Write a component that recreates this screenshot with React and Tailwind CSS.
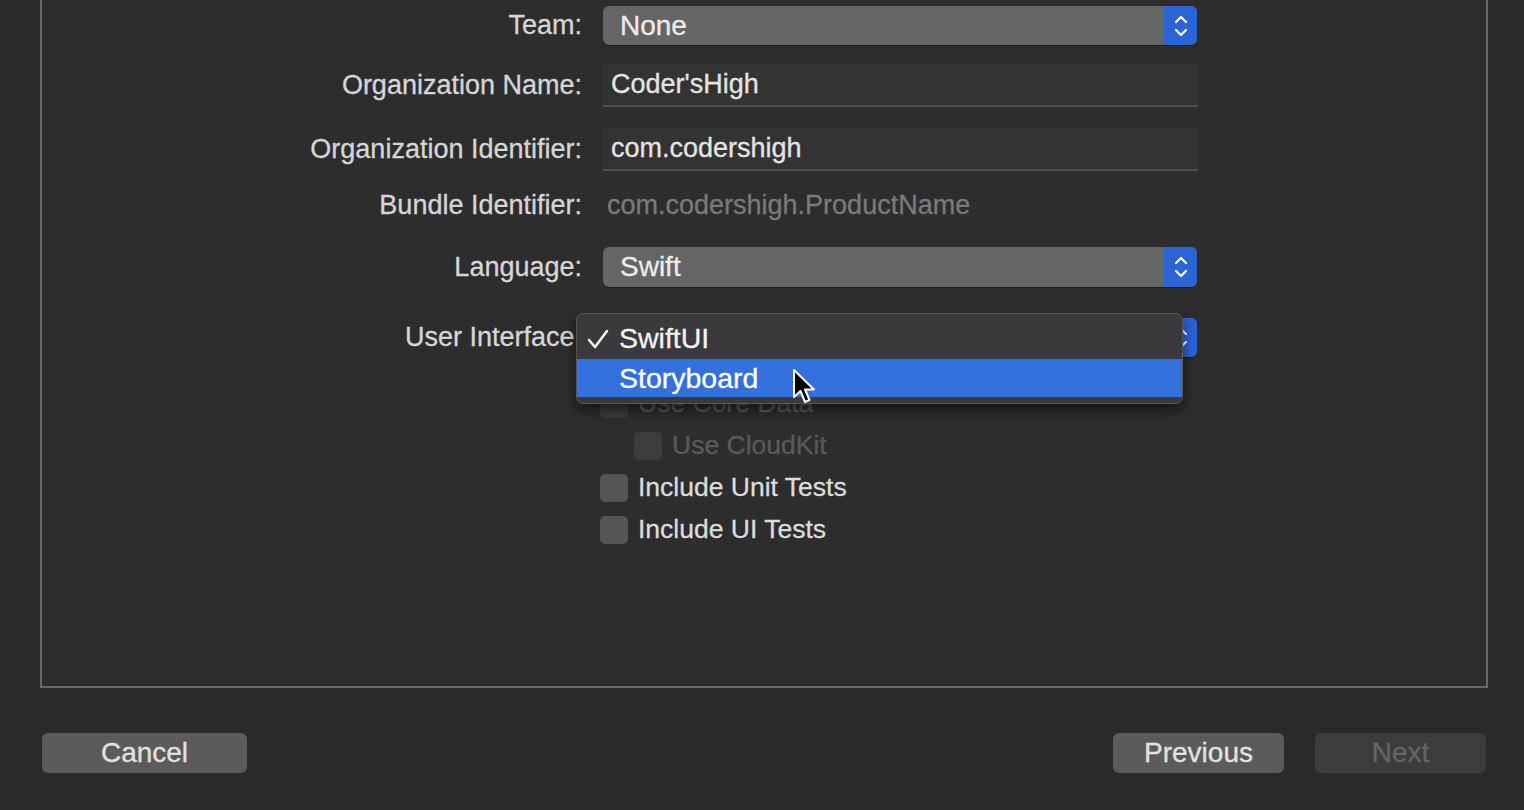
import React from 'react';

const font = { fontFamily: '"Liberation Sans", Arial, sans-serif' };

function Stepper() {
  return (
    <div className="w-[33px] h-full bg-[#2c64d6] rounded-r-[6px] flex items-center justify-center">
      <svg width="16" height="28" viewBox="0 0 16 28" fill="none" stroke="#fff" strokeWidth="2.2" strokeLinecap="round" strokeLinejoin="round">
        <path d="M3 10 L8 5 L13 10" />
        <path d="M3 18 L8 23 L13 18" />
      </svg>
    </div>
  );
}

function PopUp({ value }) {
  return (
    <div className="w-[594px] h-full bg-[#656565] rounded-[6px] flex items-stretch shadow-[0_1px_1px_rgba(0,0,0,0.4)]">
      <div className="flex-1 flex items-center pl-[17px] text-[28px] text-[#ececec]">{value}</div>
      <Stepper />
    </div>
  );
}

function TextField({ value }) {
  return (
    <div className="w-[595px] h-full bg-[#333334] border-b-2 border-[#4e4e4e] flex items-center pl-[8px] text-[27px] text-[#e4e4e4]">
      {value}
    </div>
  );
}

function Row({ label, mt, h, children }) {
  return (
    <div className={`flex items-center ${mt} ${h}`}>
      <div className="w-[540px] text-right text-[27px] text-[#d6d6d6]">{label}</div>
      <div className="ml-[21px] h-full flex items-center">{children}</div>
    </div>
  );
}

function Check({ label, mt, pl, dim }) {
  return (
    <div className={`flex items-center h-[28px] ${mt} ${pl}`}>
      <div className={`w-[28px] h-[28px] rounded-[5px] ${dim ? 'bg-[#3c3c3d]' : 'bg-[#555556]'}`} />
      <span className={`ml-[10px] text-[26.5px] ${dim ? 'text-[#5a5a5a]' : 'text-[#dcdcdc]'}`}>{label}</span>
    </div>
  );
}

function Cursor() {
  return (
    <svg className="absolute left-[215px] top-[10px]" width="26" height="36" viewBox="0 0 26 36">
      <path d="M2 1 L2 28 L8.5 22 L13 33 L17.5 31 L13 20.5 L22 20.5 Z" fill="#000" stroke="#fff" strokeWidth="2" strokeLinejoin="round" />
    </svg>
  );
}

function Menu() {
  return (
    <div className="absolute left-[534px] top-[313px] w-[607px] h-[91px] rounded-[7px] bg-[#3a3a3c] border border-[#575757] shadow-[0_6px_14px_rgba(0,0,0,0.55)] pt-[4px]">
      <div className="h-[41px] flex items-center relative text-[28.5px] text-[#f2f2f2]">
        <svg className="absolute left-[10px] top-[11px]" width="22" height="20" viewBox="0 0 22 20" fill="none" stroke="#f2f2f2" strokeWidth="2.6" strokeLinecap="round" strokeLinejoin="round">
          <path d="M2 11 L8 18 L20 2" />
        </svg>
        <span className="ml-[42px]">SwiftUI</span>
      </div>
      <div className="h-[38px] bg-[#3370db] flex items-center relative text-[28.5px] text-[#ffffff]">
        <span className="ml-[42px]">Storyboard</span>
        <Cursor />
      </div>
    </div>
  );
}

function Button({ children, w, disabled }) {
  return (
    <div className={`${w} h-[40px] rounded-[6px] flex items-center justify-center text-[28px] ${disabled ? 'bg-[#3c3c3d] text-[#656565]' : 'bg-[#5b5b5c] text-[#e2e2e2]'}`}>
      {children}
    </div>
  );
}

export default function App() {
  return (
    <div className="w-[1524px] h-[810px] bg-[#2a2a2c] overflow-hidden [-webkit-text-stroke:0.3px]" style={font}>
      <div className="ml-[40px] w-[1448px] h-[688px] border-x-2 border-b-2 border-[#696969] bg-[#2d2d2e] relative">
        <div className="flex flex-col">
          <Row label="Team:" mt="mt-[6px]" h="h-[39px]">
            <PopUp value="None" />
          </Row>
          <Row label="Organization Name:" mt="mt-[19px]" h="h-[43px]">
            <TextField value="Coder'sHigh" />
          </Row>
          <Row label="Organization Identifier:" mt="mt-[20px]" h="h-[44px]">
            <TextField value="com.codershigh" />
          </Row>
          <Row label="Bundle Identifier:" mt="mt-[15px]" h="h-[39px]">
            <span className="pl-[4px] text-[27px] text-[#7a7a7a]">com.codershigh.ProductName</span>
          </Row>
          <Row label="Language:" mt="mt-[22px]" h="h-[40px]">
            <PopUp value="Swift" />
          </Row>
          <Row label="User Interface:" mt="mt-[31px]" h="h-[39px]">
            <PopUp value="SwiftUI" />
          </Row>
          <Check label="Use Core Data" mt="mt-[33px]" pl="pl-[558px]" dim />
          <Check label="Use CloudKit" mt="mt-[14px]" pl="pl-[592px]" dim />
          <Check label="Include Unit Tests" mt="mt-[14px]" pl="pl-[558px]" />
          <Check label="Include UI Tests" mt="mt-[14px]" pl="pl-[558px]" />
        </div>
        <Menu />
      </div>
      <div className="flex items-center mt-[45px] pl-[42px] pr-[38px]">
        <Button w="w-[205px]">Cancel</Button>
        <div className="flex-1" />
        <Button w="w-[171px]">Previous</Button>
        <div className="w-[31px]" />
        <Button w="w-[171px]" disabled>Next</Button>
      </div>
    </div>
  );
}
